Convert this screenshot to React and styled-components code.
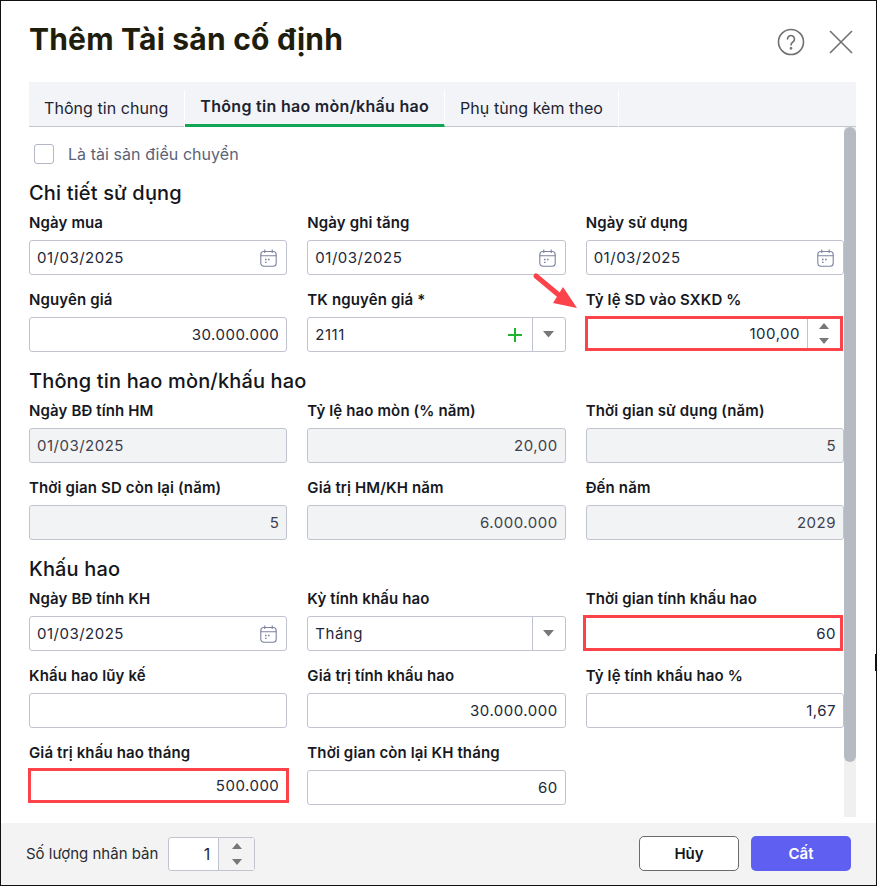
import React from "react"
import styled, { createGlobalStyle } from "styled-components"

const GlobalStyle = createGlobalStyle`
  html, body {
    margin: 0;
    padding: 0;
    background: #fff;
    overflow: hidden;
  }
  * { box-sizing: border-box; }
  body {
    font-family: Inter, "Noto Sans", "Liberation Sans", sans-serif;
  }
`

const Dialog = styled.div`
  position: relative;
  width: 877px;
  height: 886px;
  background: #fff;
  border: 1px solid #111;
  display: flex;
  flex-direction: column;
  overflow: hidden;
`
const Header = styled.div`
  height: 81px;
  flex: none;
  padding: 0 23px 0 28px;
  display: flex;
  align-items: center;
  justify-content: space-between;
`
const Title = styled.h1`
  margin: 0 0 6px;
  font-size: 30px;
  font-weight: 700;
  color: #1f1d0c;
  letter-spacing: 0.2px;
`
const HeaderIcons = styled.div`
  display: flex;
  align-items: center;
  gap: 24px;
`
const Tabs = styled.div`
  flex: none;
  margin: 0 20px 0 28px;
  height: 45px;
  padding-top: 8px;
  background: #f2f4f8;
  border-bottom: 1px solid #c4c6cf;
  display: flex;
`
const Tab = styled.div`
  padding: 0 15px 2px;
  height: 37px;
  display: flex;
  align-items: center;
  font-size: 16px;
  font-weight: ${props => props.$active ? 600 : 400};
  letter-spacing: ${props => props.$active ? "0.3px" : "0.05px"};
  color: #1d2330;
  border-right: 1px solid #fff;
  border-bottom: ${props => props.$active ? "3px solid #13a456" : "none"};
  &:first-child { padding-right: 16px; }
`
const Main = styled.div`
  flex: 1;
  min-height: 0;
  display: flex;
  margin: 0 20px 0 28px;
`
const Form = styled.div`
  flex: 1;
  min-width: 0;
`
const Scrollbar = styled.div`
  width: 12px;
  height: 690px;
  flex: none;
  background: #f0f0f0;
`
const Thumb = styled.div`
  height: 635px;
  background: #b6bac2;
  border-radius: 6px;
`
const CheckRow = styled.label`
  height: 40px;
  padding: 14px 0 0 5px;
  display: flex;
  align-items: center;
  gap: 14px;
  font-size: 16px;
  letter-spacing: 0.05px;
  color: #5b6378;
`
const CheckBox = styled.span`
  width: 20px;
  height: 20px;
  border: 1px solid #b4b7c6;
  border-radius: 3px;
  background: #fff;
`
const SectionTitle = styled.h2`
  margin: 0;
  height: 38px;
  display: flex;
  align-items: flex-end;
  font-size: 20px;
  line-height: 24px;
  font-weight: 500;
  letter-spacing: 0.15px;
  color: #14161c;
`
const FieldGrid = styled.div`
  display: grid;
  grid-template-columns: repeat(3, 1fr);
  column-gap: 20px;
  row-gap: 15px;
  padding-top: 8px;
  padding-bottom: 3px;
`
const Field = styled.div`
  display: flex;
  flex-direction: column;
  height: 62px;
`
const Label = styled.div`
  height: 27px;
  padding-top: 1px;
  font-size: 15px;
  line-height: 17px;
  font-weight: 600;
  letter-spacing: 0.13px;
  color: #17191f;
  white-space: nowrap;
`
const InputBox = styled.div`
  height: ${props => props.$markHeight || 35}px;
  flex: none;
  display: flex;
  align-items: center;
  background: ${props => props.$disabled ? "#f2f3f5" : "#fff"};
  border: ${props => props.$markMargin ? "3px solid #fb4349" : "1px solid #c1c3cf"};
  border-radius: ${props => props.$markMargin ? "0" : "3px"};
  margin: ${props => props.$markMargin || "0"};
  font-size: 15px;
  letter-spacing: 0.5px;
  color: ${props => props.$disabled ? "#3f424c" : "#22273a"};
`
const Value = styled.div`
  flex: 1;
  min-width: 0;
  padding: 0 ${props => props.$pad || 7}px;
  text-align: ${props => props.$left ? "left" : "right"};
`
const SideButton = styled.div`
  width: 33px;
  height: 100%;
  flex: none;
  border-left: 1px solid #c1c3cf;
  display: flex;
  flex-direction: column;
  align-items: center;
  justify-content: center;
  gap: ${props => props.$gap || 0}px;
`
const CalendarSlot = styled.div`
  width: 26px;
  flex: none;
  display: flex;
  align-items: center;
  color: #7c83a0;
`
const PlusSlot = styled.div`
  width: 24px;
  flex: none;
  display: flex;
  align-items: center;
`
const Footer = styled.div`
  flex: none;
  height: 62px;
  background: #f3f3f3;
  padding: 0 25px 1px;
  display: flex;
  align-items: center;
  justify-content: space-between;
`
const Copies = styled.div`
  display: flex;
  align-items: center;
  gap: 10px;
  font-size: 15px;
  color: #2a2c33;
`
const CopiesBox = styled.div`
  width: 87px;
  height: 34px;
  background: #fff;
  border: 1px solid #c1c3cf;
  border-radius: 3px;
  display: flex;
  align-items: center;
  font-size: 16px;
  color: #22273a;
`
const CopiesValue = styled.div`
  flex: 1;
  padding-right: 8px;
  text-align: right;
`
const CopiesSide = styled.div`
  width: 36px;
  height: 100%;
  background: #f3f3f3;
  border-left: 1px solid #c1c3cf;
  display: flex;
  flex-direction: column;
  align-items: center;
  justify-content: center;
  gap: 10px;
`
const Buttons = styled.div`
  display: flex;
  gap: 12px;
`
const Button = styled.button`
  width: 100px;
  height: 35px;
  border-radius: 5px;
  font-family: inherit;
  font-size: 15px;
  font-weight: 600;
  background: ${props => props.$primary ? "#5f60f1" : "#fff"};
  color: ${props => props.$primary ? "#fff" : "#14161c"};
  border: ${props => props.$primary ? "none" : "1px solid #6a6a70"};
`
const Arrow = styled.svg`
  position: absolute;
  left: 529px;
  top: 269px;
`
// vết nhỏ ở mép phải ảnh chụp
const EdgeMark = styled.div`
  position: absolute;
  left: 874px;
  top: 653px;
  width: 2px;
  height: 17px;
  border: 1px solid #111;
  border-right: none;
  background: #fff;
`

const Triangle = ({ up, size = 10 }) => (
  <svg width={size} height={size * 0.6} viewBox="0 0 10 6" style={{ display: "block" }}>
    <path d={up ? "M5 0 L10 6 L0 6 Z" : "M0 0 L10 0 L5 6 Z"} fill="#777" />
  </svg>
)

const Calendar = () => (
  <svg width="17" height="18" viewBox="0 0 17 18" fill="none" stroke="currentColor" strokeWidth="1.1">
    <rect x="0.8" y="2.5" width="15.4" height="14.7" rx="3" />
    <path d="M0.8 6.8H16.2M4.8 0.6v3.4M12.2 0.6v3.4" />
    <path d="M5 10.5h1.6M8 10.5h1.6M5 13.3h1.6" strokeWidth="1.3" />
  </svg>
)

const fields1 = [
  { label: "Ngày mua", value: "01/03/2025", type: "date" },
  { label: "Ngày ghi tăng", value: "01/03/2025", type: "date" },
  { label: "Ngày sử dụng", value: "01/03/2025", type: "date" },
  { label: "Nguyên giá", value: "30.000.000" },
  { label: "TK nguyên giá *", value: "2111", type: "combo" },
  { label: "Tỷ lệ SD vào SXKD %", value: "100,00", type: "spin", markMargin: "-1px 1px 0 -1px" },
]
const fields2 = [
  { label: "Ngày BĐ tính HM", value: "01/03/2025", left: true, disabled: true },
  { label: "Tỷ lệ hao mòn (% năm)", value: "20,00", disabled: true },
  { label: "Thời gian sử dụng (năm)", value: "5", disabled: true },
  { label: "Thời gian SD còn lại (năm)", value: "5", disabled: true },
  { label: "Giá trị HM/KH năm", value: "6.000.000", disabled: true },
  { label: "Đến năm", value: "2029", disabled: true },
]
const fields3 = [
  { label: "Ngày BĐ tính KH", value: "01/03/2025", type: "date" },
  { label: "Kỳ tính khấu hao", value: "Tháng", type: "select" },
  { label: "Thời gian tính khấu hao", value: "60", markMargin: "0 1px 0 -3px", markHeight: 36, pad: 4 },
  { label: "Khấu hao lũy kế", value: "" },
  { label: "Giá trị tính khấu hao", value: "30.000.000" },
  { label: "Tỷ lệ tính khấu hao %", value: "1,67" },
  { label: "Giá trị khấu hao tháng", value: "500.000", markMargin: "-2px -2px 0 -1px" },
  { label: "Thời gian còn lại KH tháng", value: "60" },
]

function FormField({ label, value, type, left, disabled, markMargin, markHeight, pad }) {
  const isLeft = left || type === "date" || type === "combo" || type === "select"
  return (
    <Field>
      <Label>{label}</Label>
      <InputBox $disabled={disabled} $markMargin={markMargin} $markHeight={markHeight}>
        <Value $left={isLeft} $pad={pad}>{value}</Value>
        {type === "date" && <CalendarSlot><Calendar /></CalendarSlot>}
        {type === "combo" && (
          <PlusSlot>
            <svg width="14" height="14" viewBox="0 0 14 14" stroke="#1fb32e" strokeWidth="2">
              <path d="M7 0v14M0 7h14" />
            </svg>
          </PlusSlot>
        )}
        {(type === "combo" || type === "select") && <SideButton><Triangle size={11} /></SideButton>}
        {type === "spin" && (
          <SideButton $gap={9}>
            <Triangle up />
            <Triangle />
          </SideButton>
        )}
      </InputBox>
    </Field>
  )
}

function App() {
  return (
    <Dialog>
      <GlobalStyle />
      <Header>
        <Title>Thêm Tài sản cố định</Title>
        <HeaderIcons>
          <svg width="28" height="28" viewBox="0 0 28 28" fill="none" stroke="#707070" strokeWidth="1.6">
            <circle cx="14" cy="14" r="12.5" />
            <path d="M10.5 11a3.5 3.5 0 1 1 5.4 3c-1.2.8-1.9 1.4-1.9 3" strokeLinecap="round" />
            <circle cx="14" cy="20.3" r="0.6" fill="#707070" />
          </svg>
          <svg width="24" height="24" viewBox="0 0 24 24" stroke="#707070" strokeWidth="1.6">
            <path d="M1 1l22 22M23 1L1 23" />
          </svg>
        </HeaderIcons>
      </Header>
      <Tabs>
        <Tab>Thông tin chung</Tab>
        <Tab $active>Thông tin hao mòn/khấu hao</Tab>
        <Tab>Phụ tùng kèm theo</Tab>
      </Tabs>
      <Main>
        <Form>
          <CheckRow><CheckBox />Là tài sản điều chuyển</CheckRow>
          <SectionTitle>Chi tiết sử dụng</SectionTitle>
          <FieldGrid>{fields1.map(f => <FormField key={f.label} {...f} />)}</FieldGrid>
          <SectionTitle>Thông tin hao mòn/khấu hao</SectionTitle>
          <FieldGrid>{fields2.map(f => <FormField key={f.label} {...f} />)}</FieldGrid>
          <SectionTitle>Khấu hao</SectionTitle>
          <FieldGrid>{fields3.map(f => <FormField key={f.label} {...f} />)}</FieldGrid>
        </Form>
        <Scrollbar><Thumb /></Scrollbar>
      </Main>
      <Footer>
        <Copies>
          Số lượng nhân bản
          <CopiesBox>
            <CopiesValue>1</CopiesValue>
            <CopiesSide>
              <Triangle up />
              <Triangle />
            </CopiesSide>
          </CopiesBox>
        </Copies>
        <Buttons>
          <Button>Hủy</Button>
          <Button $primary>Cất</Button>
        </Buttons>
      </Footer>
      <Arrow width="50" height="42" viewBox="0 0 50 42">
        <path d="M6 6 L30 26" stroke="#fb4349" strokeWidth="5" strokeLinecap="round" />
        <path d="M47 38 L23 33 L33 17 Z" fill="#fb4349" />
      </Arrow>
      <EdgeMark />
    </Dialog>
  )
}

export default App
